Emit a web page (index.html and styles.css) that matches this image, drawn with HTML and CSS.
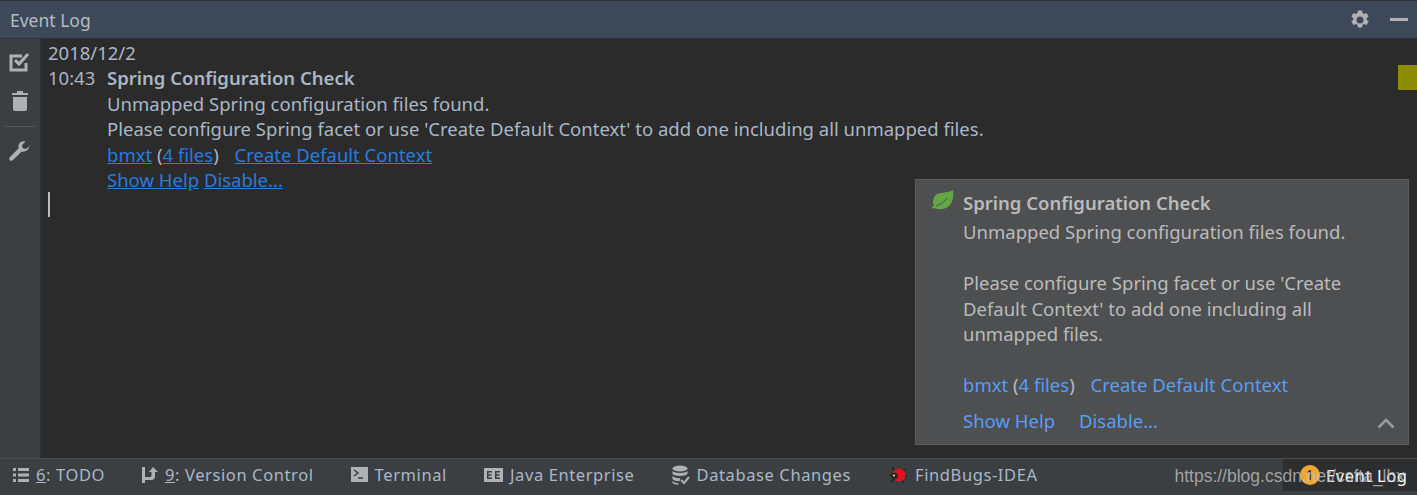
FILE: index.html
```html
<!DOCTYPE html>
<html lang="en">
<head>
    <meta charset="UTF-8">
    <title>Event Log</title>
    <link rel="stylesheet" href="styles.css">
</head>
<body>
    <div class="window">
        <div class="title-bar">
            <span class="title">Event Log</span>
            <div class="title-actions">
                <svg class="gear" width="20" height="20" viewBox="0 0 20 20">
                    <path fill="#afb1b3" fill-rule="evenodd" d="M8 0.5h4l0.5 2.6 1.6 0.9 2.5-0.9 2 3.5-2 1.7v1.4l2 1.7-2 3.5-2.500-0.900-1.600 0.900-0.500 2.600h-4l-0.500-2.600-1.600-0.900-2.500 0.900-2-3.500 2-1.700v-1.400l-2-1.700 2-3.500 2.500 0.900 1.600-0.900zM10 6.500a3.500 3.500 0 1 0 0 7 3.500 3.500 0 1 0 0-7z"/>
                </svg>
                <span class="minimize"></span>
            </div>
        </div>

        <div class="main">
            <div class="side-bar">
                <svg width="22" height="20" viewBox="0 0 22 20">
                    <path fill="none" stroke="#afb1b3" stroke-width="3" d="M17 11v7H2V4h11"/>
                    <path fill="none" stroke="#afb1b3" stroke-width="3" d="M6 8l4 4 9-10"/>
                </svg>
                <svg class="trash" width="16" height="20" viewBox="0 0 16 20">
                    <path fill="#afb1b3" d="M5 0h6v2h5v2H0V2h5zM1 6h14v12a2 2 0 0 1-2 2H3a2 2 0 0 1-2-2z"/>
                </svg>
                <span class="side-sep"></span>
                <svg width="22" height="22" viewBox="0 0 22 22">
                    <path fill="#afb1b3" d="M21 4.500l-4 3.500-3.300-0.700-0.700-3.300 3.500-3.500c-3-0.900-6.500 0.700-7 4-0.200 1 0 2 0.200 2.800l-8.700 8.700c-1 1-1 2.300-0.200 3.200 0.900 0.900 2.300 0.800 3.200-0.100l8.700-8.700c0.900 0.300 1.900 0.400 2.800 0.200 3.300-0.600 5-3.900 4.500-6.100z"/>
                </svg>
            </div>

            <div class="log">
                <div class="log-line">2018/12/2</div>
                <div class="entry">
                    <div class="entry-time">10:43</div>
                    <div class="entry-body">
                        <div class="log-line strong">Spring Configuration Check</div>
                        <div class="log-line">Unmapped Spring configuration files found.</div>
                        <div class="log-line">Please configure Spring facet or use 'Create Default Context' to add one including all unmapped files.</div>
                        <div class="log-line"><a class="link">bmxt</a> (<a class="link">4 files</a>) <a class="link create">Create Default Context</a></div>
                        <div class="log-line"><a class="link">Show Help</a> <a class="link">Disable...</a></div>
                    </div>
                </div>
                <div class="caret"></div>
            </div>

            <div class="stripe-mark"></div>

            <div class="balloon">
                <svg class="leaf" width="23" height="20" viewBox="0 0 23 20">
                    <path fill="#62a744" d="M22 0c1 6 0 12-4 16-4 4-11 4-14 2-1 0-2 1-2 1-1-1-1-1-1-2 0 0 1-1 2-1-2-4-1-9 3-12 4-2 12-1 16-4z"/>
                    <path fill="none" stroke="#4d4f51" stroke-width="1" d="M5 16c3-1 8-3 11-8"/>
                </svg>
                <div class="balloon-title">Spring Configuration Check</div>
                <p class="balloon-text">Unmapped Spring configuration files found.</p>
                <p class="balloon-text para">Please configure Spring facet or use 'Create<br>Default Context' to add one including all<br>unmapped files.</p>
                <p class="balloon-text para"><a class="balloon-link">bmxt</a> (<a class="balloon-link">4 files</a>) <a class="balloon-link create-2">Create Default Context</a></p>
                <div class="balloon-actions">
                    <a class="balloon-link">Show Help</a>
                    <a class="balloon-link">Disable...</a>
                </div>
                <svg class="collapse" width="18" height="11" viewBox="0 0 18 11">
                    <path fill="none" stroke="#9a9c9e" stroke-width="2.500" d="M1.500 9.500L9 2l7.500 7.500"/>
                </svg>
            </div>
        </div>

        <div class="status-bar">
            <div class="tool">
                <svg width="16" height="14" viewBox="0 0 16 14">
                    <path fill="#afb1b3" d="M0 0h3v3H0zM5 0h11v3H5zM0 5.500h3v3H0zM5 5.500h11v3H5zM0 11h3v3H0zM5 11h11v3H5z"/>
                </svg>
                <span><u>6</u>: TODO</span>
            </div>
            <div class="tool">
                <svg width="16" height="18" viewBox="0 0 16 18">
                    <path fill="#afb1b3" d="M0 1h3v16H0zM3 11h5c1 0 1.500-0.500 1.500-1.500V6H7l4-5 5 5h-3v4.500c0 2-1.500 3.500-3.500 3.500H3z"/>
                </svg>
                <span><u>9</u>: Version Control</span>
            </div>
            <div class="tool">
                <svg width="17" height="15" viewBox="0 0 17 15">
                    <path fill="#afb1b3" d="M0 0h17v15H0z"/>
                    <path fill="none" stroke="#3c3f41" stroke-width="1.500" d="M3 3l4 3-4 3M7 11h5"/>
                </svg>
                <span>Terminal</span>
            </div>
            <div class="tool tool-java">
                <svg width="19" height="14" viewBox="0 0 19 14">
                    <path fill="#afb1b3" fill-rule="evenodd" d="M0 0h19v14H0zM3 3v8h5V9.500H4.500v-1.800H7.500V6.300H4.500V4.500H8V3zM11 3v8h5V9.500h-3.500v-1.800h3V6.300h-3V4.500H16V3z"/>
                </svg>
                <span>Java Enterprise</span>
            </div>
            <div class="tool">
                <svg width="18" height="20" viewBox="0 0 18 20">
                    <ellipse cx="8" cy="3.500" rx="7.500" ry="3" fill="#afb1b3"/>
                    <path fill="#afb1b3" d="M0.500 6c2 2.500 13 2.500 15 0v3c-2 2.500-13 2.500-15 0zM0.500 11c1.500 1.800 5 2.300 8 2.200l-1 3c-3 0-6-0.700-7-2.200zM0.500 16c1 1.300 3 2 6 2.200v1.500c-3 0-6-1-6-2.200z"/>
                    <path fill="none" stroke="#afb1b3" stroke-width="2" d="M9 15l3 3 5-6"/>
                </svg>
                <span>Database Changes</span>
            </div>
            <div class="tool">
                <svg width="20" height="20" viewBox="0 0 20 20">
                    <path fill="none" stroke="#222" stroke-width="1.500" d="M4 2l3 4M1 10h4M3 17l3-3M17 4l-3 3M19 11h-3M16 18l-3-3"/>
                    <circle cx="11" cy="10" r="6.500" fill="#e3111b"/>
                    <circle cx="6.500" cy="11" r="3.500" fill="#2b2b2b"/>
                    <circle cx="6" cy="10.500" r="1" fill="#ddd"/>
                </svg>
                <span>FindBugs-IDEA</span>
            </div>
            <div class="event-tab">
                <span class="badge">1</span>
                <span class="event-name">Event Log</span>
            </div>
            <span class="watermark">https://blog.csdn.net/csfta_lhx</span>
        </div>
    </div>
</body>
</html>
```

FILE: styles.css
```css
html, body {
    margin: 0;
    height: 100%;
    background-color: #2b2b2b;
}

.window {
    position: relative;
    width: 1417px;
    height: 495px;
    display: flex;
    flex-direction: column;
    overflow: hidden;
    font-family: "Noto Sans", sans-serif;
    color: #a9b7c6;
}

.title-bar {
    height: 37px;
    flex: none;
    display: flex;
    align-items: center;
    justify-content: space-between;
    box-sizing: border-box;
    padding: 0 10px;
    background-color: #3d4858;
    border-top: 1px solid #2e3134;
    border-bottom: 1px solid #2f3236;
    height: 39px;
}

.title {
    font-size: 17.5px;
    color: #b4bcc4;
}

.title-actions {
    display: flex;
    align-items: center;
    gap: 20px;
    margin-right: -1px;
}

.minimize {
    width: 18px;
    height: 3px;
    background-color: #afb1b3;
}

.main {
    position: relative;
    flex: 1;
    display: flex;
    min-height: 0;
}

.side-bar {
    width: 40px;
    flex: none;
    display: flex;
    flex-direction: column;
    align-items: center;
    padding-top: 13px;
    background-color: #3c3f41;
    border-right: 1px solid #323232;
    box-sizing: content-box;
}

.side-bar svg {
    flex: none;
}

.trash {
    margin-top: 19px;
}

.side-sep {
    width: 30px;
    height: 1px;
    margin: 15px 0 14px;
    background-color: #55585a;
}

.log {
    flex: 1;
    padding: 1px 0 0 7px;
    font-size: 18.5px;
}

.log-line {
    height: 25.4px;
    line-height: 25.4px;
    white-space: nowrap;
}

.strong {
    font-weight: 600;
}

.entry {
    display: flex;
}

.entry-time {
    width: 59px;
    height: 25.4px;
    line-height: 25.4px;
}

.link {
    color: #287bde;
    text-decoration: underline;
}

.create {
    margin-left: 11px;
}

.caret {
    width: 2px;
    height: 25px;
    margin-top: 0;
    background-color: #bbbbbb;
}

.stripe-mark {
    position: absolute;
    top: 26px;
    right: 0;
    width: 19px;
    height: 25px;
    background-color: #8c8c00;
}

.balloon {
    position: absolute;
    left: 915px;
    top: 140px;
    width: 494px;
    height: 266px;
    box-sizing: border-box;
    padding: 10px 0 0 47px;
    background-color: #4d4f51;
    border: 1px solid #5a5c5e;
    color: #bbbbbb;
    font-size: 18.5px;
    line-height: 25.4px;
}

.leaf {
    position: absolute;
    left: 15px;
    top: 10px;
}

.balloon-title {
    font-weight: 600;
    margin-bottom: 4px;
}

.balloon-text {
    margin: 0;
    white-space: nowrap;
}

.para {
    margin-top: 25.4px;
}

.balloon-link {
    color: #589df6;
}

.create-2 {
    margin-left: 11px;
}

.balloon-actions {
    display: flex;
    gap: 24px;
    margin-top: 11px;
}

.collapse {
    position: absolute;
    right: 13px;
    bottom: 15px;
}

.status-bar {
    position: relative;
    height: 37px;
    flex: none;
    box-sizing: border-box;
    display: flex;
    align-items: center;
    padding: 0 0 5px 13px;
    gap: 37px;
    background-color: #3c3f41;
    border-top: 1px solid #4b4b4b;
    font-size: 16.5px;
    letter-spacing: 0.6px;
    color: #a9b7c6;
}

.tool {
    display: flex;
    align-items: center;
    gap: 7px;
    white-space: nowrap;
}

.event-tab {
    position: absolute;
    right: 0;
    top: 0;
    bottom: 4px;
    width: 134px;
    display: flex;
    align-items: center;
    background-color: #2c2e30;
}

.badge {
    width: 20px;
    height: 20px;
    margin-left: 17px;
    border-radius: 50%;
    background-color: #f0a732;
    color: #2b2b2b;
    font-size: 14px;
    line-height: 20px;
    text-align: center;
}

.event-name {
    margin-left: 6px;
    color: #ffffff;
}

.watermark {
    position: absolute;
    right: 12px;
    top: 7px;
    font-family: "Liberation Sans", sans-serif;
    font-size: 17.5px;
    letter-spacing: 0;
    color: rgba(190, 190, 190, 0.8);
}
```
